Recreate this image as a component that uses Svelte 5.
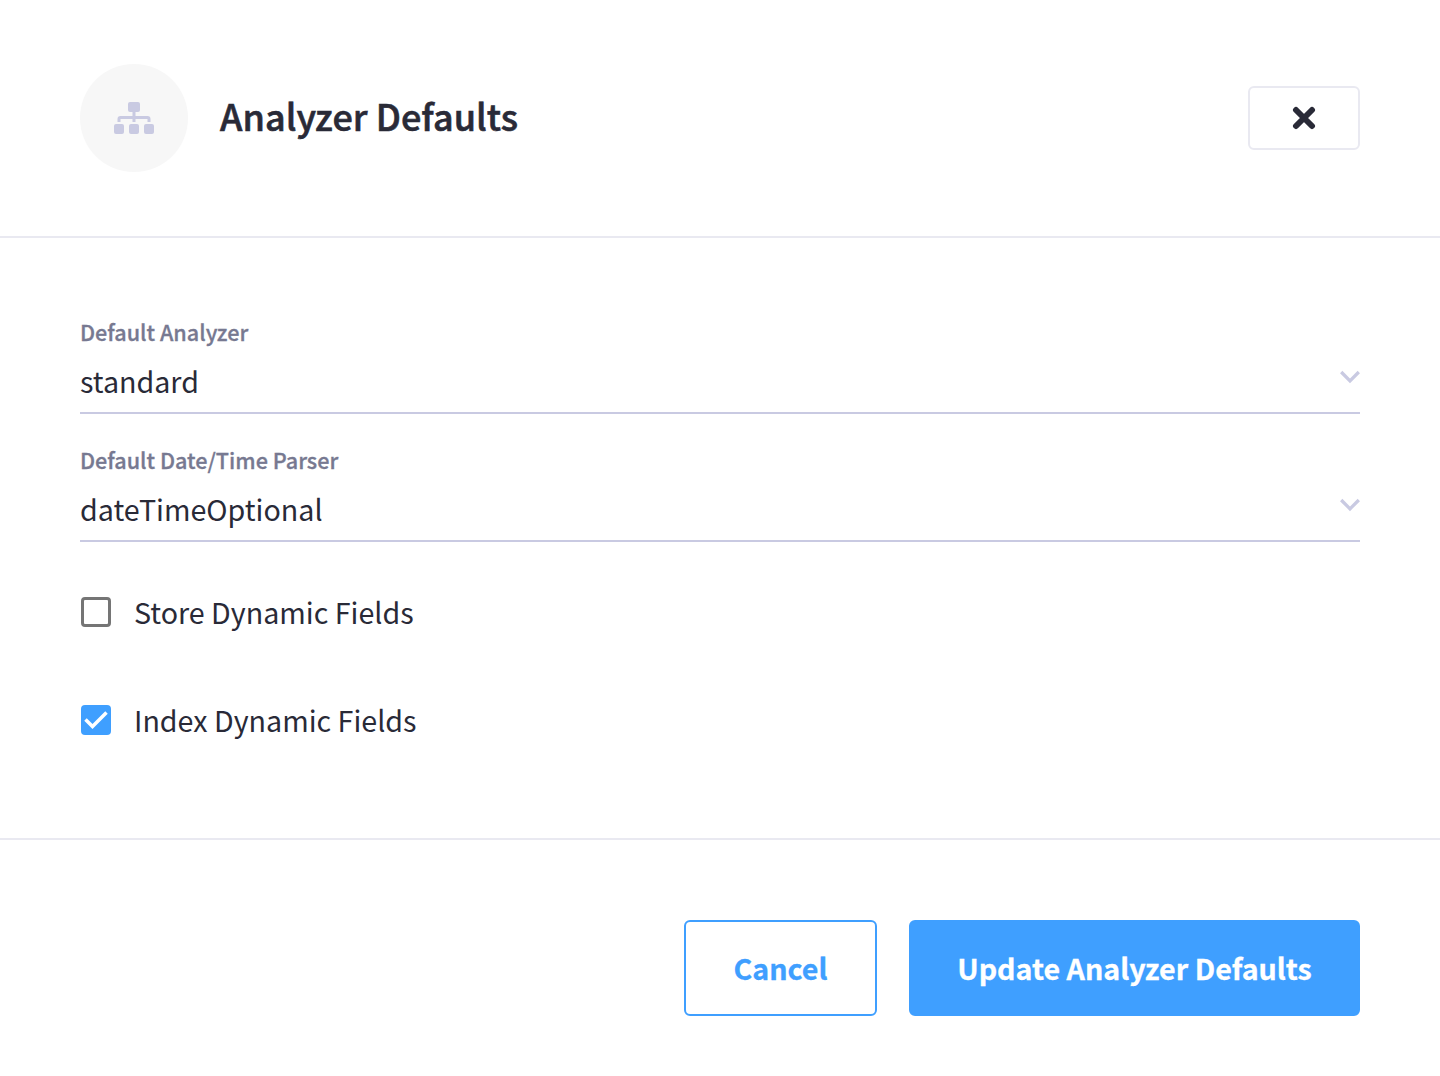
<script>
  let selects = $state([
    { label: 'Default Analyzer', value: 'standard' },
    { label: 'Default Date/Time Parser', value: 'dateTimeOptional' }
  ]);
  let checks = $state([
    { label: 'Store Dynamic Fields', on: false },
    { label: 'Index Dynamic Fields', on: true }
  ]);
</script>

<div class="dialog">
  <header>
    <div class="badge">
      <svg width="40" height="32" viewBox="0 0 40 32" aria-hidden="true">
        <rect x="14" y="0" width="12" height="10" rx="2" />
        <rect x="0" y="22" width="10" height="10" rx="2" />
        <rect x="15" y="22" width="10" height="10" rx="2" />
        <rect x="30" y="22" width="10" height="10" rx="2" />
        <path class="line" d="M20 9V20M5 20V17Q5 15.5 6.500 15.500H33.500Q35 15.500 35 17V20" />
      </svg>
    </div>
    <h1>Analyzer Defaults</h1>
    <button class="close" aria-label="Close">
      <svg width="24" height="24" viewBox="0 0 24 24" aria-hidden="true">
        <path d="M4 4L20 20M20 4L4 20" />
      </svg>
    </button>
  </header>

  <main>
    {#each selects as field}
      <div class="field">
        <span class="label">{field.label}</span>
        <div class="value">
          <span>{field.value}</span>
          <svg width="20" height="14" viewBox="0 0 20 14" aria-hidden="true">
            <path d="M1.200 2L10 10.800L18.800 2" />
          </svg>
        </div>
      </div>
    {/each}
    <div class="checks">
      {#each checks as item}
        <label class="check">
          <input type="checkbox" bind:checked={item.on} />
          <span class="box" class:on={item.on}>
            {#if item.on}
              <svg width="30" height="30" viewBox="0 0 30 30" aria-hidden="true">
                <path d="M4.500 14.500L11.500 21.500L25.500 7.500" />
              </svg>
            {/if}
          </span>
          <span class="text">{item.label}</span>
        </label>
      {/each}
    </div>
  </main>

  <footer>
    <button class="action">Cancel</button>
    <button class="action primary">Update Analyzer Defaults</button>
  </footer>
</div>

<style>
  :global(body) {
    margin: 0;
    background: #fff;
  }
  .dialog {
    box-sizing: border-box;
    height: 1076px;
    display: flex;
    flex-direction: column;
    color: #292a37;
    font-family: 'Noto Sans CJK SC', 'Noto Sans', sans-serif;
  }
  header {
    display: flex;
    align-items: center;
    height: 236px;
    padding: 0 80px;
    border-bottom: 2px solid #e9e9f1;
  }
  .badge {
    display: grid;
    place-items: center;
    width: 108px;
    height: 108px;
    border-radius: 50%;
    background: #f7f7f7;
  }
  .badge svg {
    fill: #c9cae2;
  }
  .badge .line {
    fill: none;
    stroke: #c9cae2;
    stroke-width: 3;
  }
  h1 {
    margin: 0 auto 6px 32px;
    font-size: 36px;
    line-height: 48px;
    font-weight: 500;
    letter-spacing: 0.04px;
    -webkit-text-stroke: 0.6px currentColor;
  }
  button {
    font-family: inherit;
    cursor: pointer;
    box-sizing: border-box;
    border-radius: 6px;
    background: #fff;
  }
  .close {
    display: grid;
    place-items: center;
    width: 112px;
    height: 64px;
    padding: 0;
    border: 2px solid #e9e9f1;
  }
  .close path {
    stroke: #292a37;
    stroke-width: 6;
    stroke-linecap: round;
  }
  main {
    flex: 1;
    padding: 79px 80px 0;
  }
  .field {
    height: 95px;
    margin-bottom: 31px;
    border-bottom: 2px solid #c9cae2;
  }
  .label {
    display: block;
    color: #777991;
    font-size: 21.6px;
    line-height: 30px;
    font-weight: 500;
    -webkit-text-stroke: 0.3px currentColor;
  }
  .value {
    display: flex;
    justify-content: space-between;
    align-items: center;
    font-size: 28.65px;
    line-height: 40px;
    padding-top: 14px;
  }
  .value svg {
    margin-bottom: 8px;
  }
  .value path {
    fill: none;
    stroke: #c9cae2;
    stroke-width: 3.3;
  }
  .checks {
    display: grid;
    gap: 68px;
    padding-top: 19px;
  }
  .check {
    display: flex;
    align-items: center;
    height: 40px;
  }
  .check input {
    appearance: none;
    width: 0;
    height: 0;
    margin: 0;
  }
  .box {
    box-sizing: border-box;
    width: 30px;
    height: 30px;
    margin: 0 23px 0 1px;
    border: 3px solid #757575;
    border-radius: 4px;
  }
  .box.on {
    border: 0;
    background: #3f9fff;
  }
  .box svg {
    display: block;
  }
  .box path {
    fill: none;
    stroke: #fff;
    stroke-width: 3.5;
  }
  .text {
    font-size: 28.65px;
    line-height: 40px;
  }
  footer {
    display: flex;
    justify-content: flex-end;
    gap: 32px;
    height: 156px;
    padding: 80px 80px 0;
    border-top: 2px solid #e9e9f1;
  }
  .action {
    width: 193px;
    height: 96px;
    padding: 0;
    border: 2px solid #3f9fff;
    color: #3f9fff;
    font-size: 28.65px;
    line-height: 40px;
    font-weight: 700;
    -webkit-text-stroke: 0.3px currentColor;
  }
  .action.primary {
    width: 451px;
    background: #3f9fff;
    color: #fff;
  }
</style>
